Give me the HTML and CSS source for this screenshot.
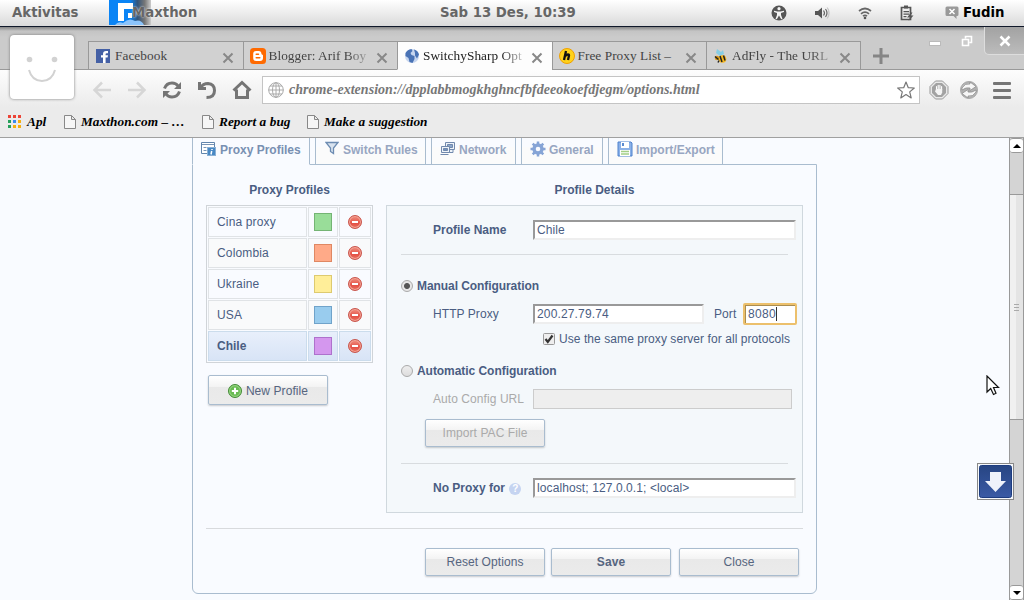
FILE: index.html
```html
<!DOCTYPE html>
<html lang="id">
  <head>
    <meta charset="UTF-8" />
    <meta name="viewport" content="width=device-width, initial-scale=1.0" />
    <title>SwitchySharp Options</title>
    <link rel="stylesheet" href="styles.css">
  </head>
  <body>
    <div class="panel">
      <span class="activities">Aktivitas</span>
      <div class="app">
        <svg class="app-icon" width="42" height="25" viewBox="0 0 42 25">
          <defs>
            <linearGradient id="fade"><stop offset="0.5" stop-color="#0a84f5" /><stop offset="0.68" stop-color="#34557a" /><stop offset="0.85" stop-color="#777" /><stop offset="1" stop-color="#ccc" /></linearGradient>
          </defs>
          <rect width="42" height="25" fill="url(#fade)" />
          <path d="M9 3h15v7h-5v5h-4v6H9z" fill="#fff" />
          <path d="M15 9h9v4h-5v6h-4z" fill="#0a84f5" />
          <path d="M19 13h4v5h-4z" fill="#fff" />
          <path d="M6 25q3-4 8-2q6-6 12-2q6-2 9 4z" fill="#8cc4fb" />
        </svg>
        <span class="app-name">Maxthon</span>
      </div>
      <span class="clock">Sab 13 Des, 10:39</span>
      <div class="tray">
        <svg width="16" height="16" viewBox="0 0 16 16"><circle cx="8" cy="8" r="7.5" fill="#555" /><circle cx="8" cy="3.7" r="1.6" fill="#f3f3f3" /><path d="M3 5.7l3.5.7h3L13 5.7v1.4l-3 .8v2l1.5 4-1.3.4L8 10.600l-2.200 3.700-1.300-.4 1.500-4v-2L3 7.100z" fill="#f3f3f3" /></svg>
        <svg width="16" height="16" viewBox="0 0 16 16"><path d="M1 6h3l4-3.500v11L4 10H1z" fill="#555" /><path d="M9.500 5.500q2 2.500 0 5M11.500 4q3 4 0 8" fill="none" stroke="#666" stroke-width="1.200" /><path d="M13.300 2.500q3.500 5.500 0 11" fill="none" stroke="#bbb" /></svg>
        <svg width="16" height="16" viewBox="0 0 16 16"><path d="M2 6q6-5 12 0M4 8.800q4-3.400 8 0M6 11.200q2-1.600 4 0" fill="none" stroke="#666" stroke-width="1.700" /><circle cx="8" cy="13" r="1.300" fill="#555" /></svg>
        <svg width="16" height="16" viewBox="0 0 16 16"><path d="M2.500 2.500h9v12h-9z" fill="#eee" stroke="#555" stroke-width="1.700" /><path d="M5 .5h4v3H5zM4.500 6h5.500v1.200H4.500zM4.500 8.500h5.500v1.200H4.500zM4.500 11h3v1.200h-3z" fill="#555" /><path d="M12 7.500l-4 5h3l-1.500 3.500 5-5.500h-3l2-3z" fill="#555" /></svg>
        <svg width="14" height="14" viewBox="0 0 14 14"><path d="M2 .5h10q1.500 0 1.500 1.500v6.500q0 1.500-1.500 1.500h-.5v3L8.500 10H2Q.5 10 .5 8.500V2Q.5.500 2 .5z" fill="#999" /><path d="M4.500 3l5 5M9.500 3l-5 5" stroke="#fff" stroke-width="1.500" /></svg>
      </div>
      <span class="user">Fudin</span>
    </div>

    <div class="tabstrip">
      <div class="tab">
        <svg width="14" height="14" viewBox="0 0 14 14"><rect width="14" height="14" fill="#4460a5" /><path d="M7 14V8.500H5V6.200h2V5q0-3 3-3h2v2.300h-1.400q-1 0-1 1v.9H12l-.4 2.300h-2V14z" fill="#fff" /></svg>
        <span class="tab-title first">Facebook</span>
        <svg class="tab-close" width="12" height="12" viewBox="0 0 12 12"><path d="M1.500 1.500l9 9M10.500 1.500l-9 9" /></svg>
      </div>
      <div class="tab">
        <svg width="16" height="16" viewBox="0 0 16 16"><rect width="16" height="16" rx="3.500" fill="#ff6a00" /><path d="M6.200 3h2.600q2.500 0 2.700 3 .2.800 1 .8.500 0 .5.600V10q0 3-3 3H6.200q-3 0-3-3V6q0-3 3-3z" fill="#fff" /><path d="M6.200 6.200h2.300M6.200 9.800h3.600" stroke="#ff6a00" stroke-width="1.500" stroke-linecap="round" /></svg>
        <span class="tab-title faded">Blogger: Arif Boy</span>
        <svg class="tab-close" width="12" height="12" viewBox="0 0 12 12"><path d="M1.500 1.500l9 9M10.500 1.500l-9 9" /></svg>
      </div>
      <div class="tab active">
        <svg width="16" height="16" viewBox="0 0 16 16"><circle cx="8" cy="8" r="7" fill="#c7d6ef" /><path d="M1.500 5q2-3.500 6-4l1 2-2 2 1 2 3 1v3l-2 4-3-1-1-4-3-2zM10 1.500q4 1 5 5l-2 4-2-3V5z" fill="#4a73b5" /></svg>
        <span class="tab-title faded">SwitchySharp Opt</span>
        <svg class="tab-close" width="12" height="12" viewBox="0 0 12 12"><path d="M1.500 1.500l9 9M10.500 1.500l-9 9" /></svg>
      </div>
      <div class="tab">
        <svg width="16" height="16" viewBox="0 0 16 16"><circle cx="8" cy="8" r="7.500" fill="#ffd21a" stroke="#f0a000" /><path d="M7 3L5 12M6 8q4-3 4-.5L9 12" fill="none" stroke="#111" stroke-width="2.300" /></svg>
        <span class="tab-title">Free Proxy List –</span>
        <svg class="tab-close" width="12" height="12" viewBox="0 0 12 12"><path d="M1.500 1.500l9 9M10.500 1.500l-9 9" /></svg>
      </div>
      <div class="tab">
        <svg width="16" height="16" viewBox="0 0 16 16"><path d="M4 1l4 3 2-2 1 4-4 2-4-3z" fill="#86cde4" /><ellipse cx="9.500" cy="11" rx="3.800" ry="3.800" fill="#f5b51c" /><circle cx="4" cy="10" r="2.200" fill="#d79a18" /><path d="M7 8l2 6M10.500 7.500l1.500 5M2 8.500l3.500 3M5 14.500l1-2" stroke="#222" stroke-width="1.500" /></svg>
        <span class="tab-title faded">AdFly - The URL</span>
        <svg class="tab-close" width="12" height="12" viewBox="0 0 12 12"><path d="M1.500 1.500l9 9M10.500 1.500l-9 9" /></svg>
      </div>
      <svg class="new-tab" width="18" height="18" viewBox="0 0 18 18"><path d="M9 1v16M1 9h16" stroke="#858585" stroke-width="3" /></svg>
      <div class="window-buttons">
        <svg class="minimize" width="12" height="6" viewBox="0 0 12 6"><rect x=".5" y=".5" width="11" height="4" fill="#fff" stroke="#bbb" /></svg>
        <svg class="restore" width="12" height="12" viewBox="0 0 12 12"><path d="M4.500 3.500V1.500h6v6H8.500M1.500 4.500h6v6h-6z" fill="none" stroke="#fff" stroke-width="1.600" /></svg>
        <div class="close-window">
          <svg width="12" height="12" viewBox="0 0 12 12"><path d="M1.500 1.500l9 9M10.500 1.500l-9 9" stroke="#fff" stroke-width="2.500" /></svg>
        </div>
      </div>
    </div>

    <div class="avatar">
      <svg width="64" height="64" viewBox="0 0 64 64"><circle cx="19.500" cy="24.500" r="2.800" fill="#d2d2d2" /><circle cx="44.500" cy="24.500" r="2.800" fill="#d2d2d2" /><path d="M19 35q3 11 13 11t13-11" fill="none" stroke="#d2d2d2" stroke-width="2" /></svg>
    </div>

    <div class="toolbar">
      <div class="nav">
        <svg width="20" height="18" viewBox="0 0 20 18"><path d="M10 1.500L2.500 9l7.500 7.500M3 9h16" class="nav-off" /></svg>
        <svg width="20" height="18" viewBox="0 0 20 18"><path d="M10 1.500L17.500 9 10 16.500M17 9H1" class="nav-off" /></svg>
        <svg width="20" height="18" viewBox="0 0 20 18"><path d="M2.500 7.500Q4.500 2 10 2q4 0 6 3M17.500 10.500Q15.500 16 10 16q-4 0-6-3" class="nav-on" /><path d="M19 1v7h-7zM1 17v-7h7z" fill="#757575" /></svg>
        <svg width="20" height="20" viewBox="0 0 20 20"><path d="M2.500 2v6.500H9M3 8Q6 3.500 11 3.500q6.500.5 6.500 7 0 7-8 7" class="nav-on" /></svg>
        <svg width="20" height="20" viewBox="0 0 20 20"><path d="M1.500 10.500L10 2.500l8.500 8M4.500 9.500v8h11v-8" class="nav-on" /></svg>
      </div>
      <div class="address">
        <svg width="16" height="16" viewBox="0 0 16 16"><g fill="none" stroke="#aaa"><circle cx="8" cy="8" r="7.300" /><ellipse cx="8" cy="8" rx="3.500" ry="7.300" /><path d="M8 .5v15M.5 8h15M2 4h12M2 12h12" /></g></svg>
        <span class="url">chrome-extension://dpplabbmogkhghncfbfdeeokoefdjegm/options.html</span>
        <svg class="star" width="18" height="18" viewBox="0 0 18 18"><path d="M9 1l2.300 5.700 6 .3-4.600 3.900 1.500 6L9 13.500l-5.200 3.400 1.500-6L.7 7l6-.3z" fill="#fff" stroke="#777" stroke-width="1.200" stroke-linejoin="round" /></svg>
      </div>
      <svg class="ext" width="20" height="20" viewBox="0 0 20 20"><path d="M6.500 1h7L19 6.500v7L13.500 19h-7L1 13.500v-7z" fill="#e8e8e8" stroke="#999" /><path d="M7 3h6l4 4v6l-4 4H7l-4-4V7z" fill="#a2a2a2" /><path d="M7.500 10V6.500M9.200 9V5.200M10.900 9V5.200M12.600 10V6.500" stroke="#fff" stroke-width="1.100" stroke-linecap="round" /><path d="M7 9h6.200v3.500L12 15H9l-3-3.500z" fill="#f4f4f4" /></svg>
      <svg class="ext" width="20" height="20" viewBox="0 0 20 20"><circle cx="10" cy="10" r="8.500" fill="#b0b0b0" stroke="#aaa" /><path d="M3 8q3-5 8-4V2l6 4.500-6 4V8Q7 7 3 10zM17 12q-3 5-8 4v2l-6-4.500 6-4V12q4 1 8-2z" fill="#f6f6f6" stroke="#888" stroke-width=".7" /></svg>
      <div class="menu"><i></i><i></i><i></i></div>
    </div>

    <div class="bookmarks">
      <div class="bookmark apps">
        <svg width="13" height="13" viewBox="0 0 13 13"><path d="M0 0h3v3H0zM5 0h3v3H5zM10 0h3v3h-3z" fill="#ec4437" /><path d="M0 5h3v3H0zM0 10h3v3H0z" fill="#26a05a" /><path d="M5 5h3v3H5z" fill="#3a8af0" /><path d="M10 5h3v3h-3zM5 10h3v3H5zM10 10h3v3h-3z" fill="#f5ae10" /></svg>
        <span>Apl</span>
      </div>
      <div class="bookmark home-page">
        <svg width="12" height="14" viewBox="0 0 12 14"><path d="M.5.500h7l4 4v9H.5zM7.500.500v4h4" fill="#f6f6f6" stroke="#888" /></svg>
        <span>Maxthon.com – …</span>
      </div>
      <div class="bookmark report">
        <svg width="12" height="14" viewBox="0 0 12 14"><path d="M.5.500h7l4 4v9H.5zM7.500.500v4h4" fill="#f6f6f6" stroke="#888" /></svg>
        <span>Report a bug</span>
      </div>
      <div class="bookmark">
        <svg width="12" height="14" viewBox="0 0 12 14"><path d="M.5.500h7l4 4v9H.5zM7.500.500v4h4" fill="#f6f6f6" stroke="#888" /></svg>
        <span>Make a suggestion</span>
      </div>
    </div>

    <div class="page">
      <div class="options">
        <div class="option-tabs">
          <div class="option-tab profiles selected">
            <svg width="16" height="16" viewBox="0 0 16 16"><path d="M.5 1.500h13v11H.5z" fill="#fff" stroke="#6185ad" /><path d="M1 3.500h12M2.500 6.500h3M7 6.500h5M2.500 9.500h3" stroke="#7894b5" /><rect x="6.500" y="6.500" width="8" height="8" fill="#4888c4" stroke="#8ab0d5" /><path d="M11 8v1M10.700 10l-.7 3.500" stroke="#fff" stroke-width="1.500" /></svg>
            <span>Proxy Profiles</span>
          </div>
          <div class="option-tab rules">
            <svg width="14" height="14" viewBox="0 0 14 14"><path d="M1 1.500h12L8.500 7v5.500l-3-2V7z" fill="#d9e3ef" stroke="#6d8cb2" stroke-width="1.300" /></svg>
            <span>Switch Rules</span>
          </div>
          <div class="option-tab network">
            <svg width="16" height="16" viewBox="0 0 16 16"><g fill="#eef3f9" stroke="#7189ad"><path d="M5.500 1.500h9v7h-9zM8 11.500h5v-3H8z" /><path d="M7.500 3.500h5v3h-5z" fill="#8aa6cb" /><path d="M1.500 5.500h8v6h-8zM.5 13.500h8" /><path d="M3.500 7.500h4v2h-4z" fill="#7291bf" /></g></svg>
            <span>Network</span>
          </div>
          <div class="option-tab general">
            <svg width="16" height="16" viewBox="0 0 16 16"><path d="M8 .5v15M.5 8h15M2.700 2.700l10.600 10.600M13.300 2.700L2.700 13.300" stroke="#86a4d6" stroke-width="2.500" /><circle cx="8" cy="8" r="4" fill="#f8faff" stroke="#86a4d6" stroke-width="3.400" /></svg>
            <span>General</span>
          </div>
          <div class="option-tab export">
            <svg width="16" height="16" viewBox="0 0 16 16"><path d="M1 1h13l1 1v13H1z" fill="#8bb1e8" stroke="#4f82cd" /><path d="M4 1h8v6H4zM3 9h10v6H3z" fill="#fff" /><path d="M5 2h2v3H5z" fill="#5b8bd0" /><path d="M4 10.500h8M4 13h8" stroke="#a3cf86" stroke-width="1.500" /></svg>
            <span>Import/Export</span>
          </div>
        </div>

        <div class="content">
          <div class="columns">
            <div class="profiles-column">
              <h3>Proxy Profiles</h3>
              <div class="profile-table">
                <div class="cell">Cina proxy</div>
                <div class="cell center"><div class="swatch green"></div></div>
                <div class="cell center"><span class="delete"></span></div>
                <div class="cell">Colombia</div>
                <div class="cell center"><div class="swatch orange"></div></div>
                <div class="cell center"><span class="delete"></span></div>
                <div class="cell">Ukraine</div>
                <div class="cell center"><div class="swatch yellow"></div></div>
                <div class="cell center"><span class="delete"></span></div>
                <div class="cell">USA</div>
                <div class="cell center"><div class="swatch blue"></div></div>
                <div class="cell center"><span class="delete"></span></div>
                <div class="cell current">Chile</div>
                <div class="cell center current"><div class="swatch purple"></div></div>
                <div class="cell center current"><span class="delete"></span></div>
              </div>
              <button class="button new-profile">
                <svg width="14" height="14" viewBox="0 0 14 14"><circle cx="7" cy="7" r="6.500" fill="#6abb54" stroke="#458b39" /><circle cx="7" cy="7" r="5.400" fill="none" stroke="#a5dc90" stroke-width=".8" /><path d="M7 3.800v6.400M3.800 7h6.400" stroke="#fff" stroke-width="2" /></svg>
                <span>New Profile</span>
              </button>
            </div>

            <div class="details-column">
              <h3>Profile Details</h3>
              <div class="details">
                <div class="row">
                  <span class="label strong">Profile Name</span>
                  <input class="field wide" type="text" value="Chile" />
                </div>
                <div class="line"></div>
                <div class="row manual">
                  <span class="radio on"></span>
                  <b>Manual Configuration</b>
                </div>
                <div class="row http">
                  <span class="label">HTTP Proxy</span>
                  <input class="field host" type="text" value="200.27.79.74" />
                  <span class="port-label">Port</span>
                  <div class="field port">8080<span class="caret"></span></div>
                </div>
                <div class="row same">
                  <svg width="12" height="12" viewBox="0 0 12 12"><rect x=".5" y=".5" width="11" height="11" rx="1" fill="#eee" stroke="#999" /><path d="M2.500 6l2.300 3L9.500 2.500" fill="none" stroke="#333" stroke-width="2.200" /></svg>
                  <span>Use the same proxy server for all protocols</span>
                </div>
                <div class="row auto">
                  <span class="radio"></span>
                  <b>Automatic Configuration</b>
                </div>
                <div class="row auto-url">
                  <span class="label muted">Auto Config URL</span>
                  <input class="field disabled" type="text" disabled />
                </div>
                <button class="button import" disabled>Import PAC File</button>
                <div class="line second"></div>
                <div class="row">
                  <span class="label strong">No Proxy for <span class="help">?</span></span>
                  <input class="field wide" type="text" value="localhost; 127.0.0.1; &lt;local&gt;" />
                </div>
              </div>
            </div>
          </div>

          <div class="footer">
            <button class="button">Reset Options</button>
            <button class="button save">Save</button>
            <button class="button">Close</button>
          </div>
        </div>
      </div>

      <div class="scrollbar">
        <div class="arrow"><svg width="8" height="4" viewBox="0 0 8 4"><path d="M4 0l4 4H0z" /></svg></div>
        <div class="thumb"><i></i><i></i><i></i></div>
        <div class="arrow"><svg width="8" height="4" viewBox="0 0 8 4"><path d="M0 0h8L4 4z" /></svg></div>
      </div>
    </div>

    <div class="scroll-down">
      <svg width="33" height="33" viewBox="0 0 33 33"><defs><linearGradient id="navy" x2="0" y2="1"><stop offset="0" stop-color="#274583" /><stop offset="1" stop-color="#3a5aa5" /></linearGradient></defs><rect x=".5" y=".5" width="32" height="32" rx="2" fill="url(#navy)" stroke="#1d3c80" /><path d="M11 7h11v9h5L16.500 27 6 16h5z" fill="#eef2fb" /></svg>
    </div>
    <svg class="cursor" width="14" height="21" viewBox="0 0 14 21"><path d="M1 1v16l3.700-3.500L7.500 19.500l2.500-1.200L7.500 12.500h5z" fill="#fff" stroke="#111" stroke-width="1.200" /></svg>
  </body>
</html>
```
FILE: styles.css
```css
* {
  box-sizing: border-box;
}

body {
  margin: 0;
  width: 1024px;
  height: 600px;
  overflow: hidden;
  position: relative;
  background: #f9fbff;
  font-family: "Liberation Sans", Arial, sans-serif;
  font-size: 12px;
  color: #4a5d82;
}

svg {
  display: block;
  flex: none;
}

/* desktop panel */
.panel {
  display: flex;
  align-items: center;
  height: 27px;
  padding: 0 0 1px 12px;
  background: linear-gradient(#fff, #dadada);
  border-bottom: 1px solid #10182a;
  font-family: "DejaVu Sans", sans-serif;
  font-size: 13.300px;
  font-weight: bold;
  line-height: 25px;
  color: #666;
  white-space: nowrap;
}

.activities {
  width: 97px;
}

.app {
  display: flex;
  width: 331px;
}

.app-name {
  margin-left: -19px;
  text-shadow: 0 0 2px #fff;
}

.clock {
  width: 331px;
}

.tray {
  display: flex;
  align-items: center;
  width: 192px;
}

.tray svg {
  margin-right: 27px;
}

.tray svg:nth-child(3) {
  margin-right: 26px;
}

.tray svg:nth-child(4) {
  margin-right: 30px;
}

.tray svg:last-child {
  margin-right: 0;
}

.user {
  color: #000;
}

/* browser tabs */
.tabstrip {
  display: flex;
  align-items: flex-end;
  height: 43px;
  padding-left: 88px;
  background: linear-gradient(#858585, #c4c4c4 4px, #cbcbcb 10px);
  box-shadow: inset 0 -1px #999;
}

.tab {
  display: flex;
  flex: none;
  align-items: center;
  width: 154.500px;
  height: 29px;
  padding: 1px 0 0 6px;
  background: #d1d1d1;
  border: 1px solid #999;
  border-right-width: 0;
  font-family: "Liberation Serif", serif;
  font-size: 13.300px;
  color: #444;
}

.tab:first-child {
  padding-left: 7px;
}

.tab:nth-child(5) {
  border-right-width: 1px;
}

.tab.active {
  background: #fdfdfd;
  border-bottom-color: #fdfdfd;
  color: #222;
}

.tab-title {
  flex: 1;
  margin: 0 5px 0 3px;
  padding-bottom: 1px;
  letter-spacing: 0.050px;
  white-space: nowrap;
}

.tab-title.first {
  margin-left: 5px;
}

.faded {
  -webkit-mask-image: linear-gradient(to right, #000 78px, rgba(0, 0, 0, 0.3) 98px);
  mask-image: linear-gradient(to right, #000 78px, rgba(0, 0, 0, 0.3) 98px);
}

.tab-close {
  margin: 3px 9px 0 0;
}

.tab-close path {
  stroke: #888;
  stroke-width: 2;
}

.new-tab {
  margin: 0 0 5px 11px;
}

.window-buttons {
  display: flex;
  flex: none;
  align-self: flex-start;
  margin-left: 39px;
}

.minimize {
  margin-top: 14px;
}

.restore {
  margin: 8px 11px 0 20px;
}

.close-window {
  display: flex;
  align-items: center;
  justify-content: center;
  width: 42px;
  height: 28px;
  background: linear-gradient(#a2a2a2, #bcbcbc);
  border: 1px solid #ddd;
  border-top: 0;
  border-radius: 0 0 0 5px;
}

.avatar {
  position: absolute;
  left: 10px;
  top: 35px;
  background: #fff;
  border-radius: 4px;
  box-shadow: 0 0 3px #777;
}

/* address row */
.toolbar {
  display: flex;
  align-items: center;
  height: 37px;
  padding: 3px 0 0 84px;
  background: linear-gradient(#fdfdfd, #ebebeb);
}

.nav {
  display: grid;
  grid-template-columns: repeat(5, 35px);
  justify-items: center;
  align-items: center;
}

.nav-off {
  fill: none;
  stroke: #d6d6d6;
  stroke-width: 2.500;
}

.nav-on {
  fill: none;
  stroke: #757575;
  stroke-width: 3;
}

.address {
  display: flex;
  align-items: center;
  width: 658px;
  height: 28px;
  margin-left: 3px;
  padding: 0 4px 0 5px;
  background: #fff;
  border: 1px solid #c4c4c4;
}

.url {
  flex: 1;
  margin-left: 5px;
  font: italic bold 14px "Liberation Serif", serif;
  letter-spacing: 0.030px;
  color: #777;
}

.ext {
  margin-left: 9px;
}

.ext + .ext {
  margin-left: 10px;
}

.menu {
  display: grid;
  gap: 4px;
  width: 18px;
  margin-left: 14px;
}

.menu i {
  height: 3px;
  background: #757575;
  border-radius: 1px;
}

.bookmarks {
  display: flex;
  height: 31px;
  padding: 0 0 1px 8px;
  background: #ebebeb;
  border-bottom: 1px solid #a0a0a0;
  font: italic bold 13.300px "Liberation Serif", serif;
  letter-spacing: 0.050px;
  color: #000;
}

.bookmark {
  display: flex;
  align-items: center;
  gap: 5px;
  white-space: nowrap;
}

.apps {
  gap: 6px;
  width: 56px;
}

.home-page {
  width: 138px;
}

.report {
  width: 105px;
}

/* options page */
.page {
  display: flex;
  justify-content: space-between;
  height: 462px;
}

.options {
  width: 625px;
  margin-left: 192px;
}

.option-tabs {
  display: flex;
  position: relative;
  gap: 5px;
  height: 27px;
  margin-bottom: -1px;
}

.option-tab {
  display: flex;
  gap: 3px;
  padding: 3px 0 0 8px;
  background: linear-gradient(#f9fbff 9px, #fbfbfb 9px);
  border: 1px solid #a9bccf;
  border-top: 0;
  font-weight: bold;
  line-height: 18px;
  color: #97a6c2;
  white-space: nowrap;
}

.option-tab.selected {
  background: #f9fbff;
  border-bottom-color: #f9fbff;
  color: #7890b2;
}

.profiles {
  width: 118px;
}

.rules {
  gap: 4px;
  width: 111px;
  padding-left: 9px;
}

.network {
  width: 85px;
}

.general {
  width: 82px;
}

.export {
  width: 115px;
}

.content {
  height: 430px;
  padding: 0 13px;
  border: 1px solid #a9bccf;
  border-radius: 0 0 6px 6px;
}

.columns {
  display: flex;
  gap: 13px;
  height: 364px;
  border-bottom: 1px solid #d8dadd;
}

h3 {
  height: 40px;
  margin: 0;
  font-size: 12px;
  line-height: 51px;
  text-align: center;
}

.profiles-column {
  width: 167px;
}

.profile-table {
  display: grid;
  grid-template-columns: 99px 30px 32px;
  grid-auto-rows: 30px;
  gap: 1px;
  padding: 1px;
  border: 1px solid #d0d4d8;
  letter-spacing: 0.150px;
}

.cell {
  padding-left: 8px;
  border: 1px solid #e0e3e6;
  line-height: 28px;
}

.cell:nth-child(6n + 4),
.cell:nth-child(6n + 5),
.cell:nth-child(6n + 6) {
  background: #f9fafb;
}

.center {
  display: flex;
  align-items: center;
  justify-content: center;
  padding: 0;
}

.cell.current {
  background: linear-gradient(#e8effb, #d8e4f6);
  border-color: #cbdcec;
  font-weight: bold;
  letter-spacing: 0;
}

.swatch {
  width: 18px;
  height: 18px;
  border: 1px solid;
}

.green {
  background: #99dd99;
  border-color: #74b474;
}

.orange {
  background: #ffaa88;
  border-color: #df8863;
}

.yellow {
  background: #ffee99;
  border-color: #ddca70;
}

.blue {
  background: #99ccee;
  border-color: #70a3ca;
}

.purple {
  background: #d497ee;
  border-color: #ae71cc;
}

.delete {
  display: flex;
  align-items: center;
  justify-content: center;
  width: 14px;
  height: 14px;
  background: linear-gradient(#f09080, #e45045 60%, #e87060);
  border: 1px solid #c8534a;
  border-radius: 50%;
  box-shadow: inset 0 0 0 1px #f4a89a;
}

.delete::before {
  content: "";
  width: 6px;
  height: 2px;
  background: #fff;
}

.button {
  width: 120px;
  height: 28px;
  padding: 0;
  background: linear-gradient(#fff, #f3f3f3 40%, #e9e9e9 40%, #ebebeb);
  border: 1px solid #a9bccf;
  border-radius: 2px;
  box-shadow: 0 1px 2px rgba(0, 0, 0, 0.2);
  font: 12px "Liberation Sans", Arial, sans-serif;
  letter-spacing: 0.080px;
  color: #56657f;
}

.new-profile {
  display: flex;
  align-items: center;
  justify-content: center;
  gap: 4px;
  height: 30px;
  margin: 12px 0 0 2px;
  padding-top: 1px;
}

.details-column {
  width: 417px;
}

.details {
  height: 308px;
  padding: 13px 0 0 14px;
  background: #f4f8fb;
  border: 1px solid #d0d8de;
}

.row {
  display: flex;
  align-items: center;
  height: 22px;
  letter-spacing: 0.070px;
  white-space: nowrap;
}

.row b {
  letter-spacing: -0.070px;
}

.auto b {
  letter-spacing: -0.050px;
}

.label {
  width: 132px;
  padding-left: 32px;
}

.strong {
  font-weight: bold;
  letter-spacing: 0;
}

.muted {
  color: #aaa;
}

.field {
  height: 20px;
  padding: 0 2px;
  background: #fff;
  border: 2px solid;
  border-color: #999 #eee #eee #999;
  font: 12px "Liberation Sans", Arial, sans-serif;
  letter-spacing: 0.100px;
  color: #4a5d82;
}

.wide {
  width: 263px;
}

.host {
  width: 171px;
  letter-spacing: 0.150px;
}

.port-label {
  width: 40px;
  padding-left: 10px;
}

.port {
  display: flex;
  align-items: center;
  width: 52px;
  border: 1px solid;
  border-color: #a98d52 #eee #eee #a98d52;
  padding-left: 3px;
  outline: 2px solid #ecc06c;
  outline-offset: -1px;
  border-radius: 1px;
  box-shadow: inset 1px 1px #a98d52;
  letter-spacing: 0.300px;
}

.caret {
  width: 1px;
  height: 14px;
  background: #333;
}

.line {
  width: 387px;
  height: 1px;
  margin: 13px 0 20px;
  background: #d8dcdf;
}

.radio {
  width: 12px;
  height: 12px;
  margin-right: 4px;
  background: linear-gradient(#eee, #ddd);
  border: 1px solid #aaa;
  border-radius: 50%;
}

.radio.on {
  background: radial-gradient(circle, #555 2.500px, #e6e6e6 3.500px);
}

.http,
.auto-url {
  margin-top: 6px;
}

.same {
  gap: 4px;
  margin-top: 3px;
  padding-left: 142px;
}

.auto {
  margin-top: 10px;
}

.disabled {
  width: 259px;
  background: #eee;
  border: 1px solid #ccc;
}

.import {
  display: block;
  margin: 9px 0 0 24px;
  color: #aaa;
}

.line.second {
  margin: 16px 0 13px;
}

.help {
  display: inline-block;
  width: 12px;
  height: 12px;
  margin-left: 1px;
  background: #c5d4f1;
  border-radius: 50%;
  font-size: 10px;
  line-height: 12px;
  text-align: center;
  color: #fff;
}

.footer {
  display: flex;
  gap: 6px;
  padding: 19px 0 0 219px;
}

.save {
  margin-right: 2px;
  font-weight: bold;
}

.scrollbar {
  display: flex;
  flex-direction: column;
  justify-content: space-between;
  width: 15px;
  background: #d4d4d4;
  border: 1px solid #999;
  border-width: 0 1px;
}

.arrow {
  display: flex;
  align-items: center;
  justify-content: center;
  height: 15px;
  background: #fff;
  border: 1px solid #999;
  border-width: 1px 0;
  border-radius: 3px;
}

.thumb {
  display: flex;
  flex-direction: column;
  align-items: center;
  justify-content: center;
  gap: 2px;
  height: 226px;
  margin: 41px 0 165px;
  background: linear-gradient(to right, #f0f0f0 50%, #e4e4e4 50%);
  border: 1px solid #999;
  border-width: 1px 0;
}

.thumb i {
  width: 5px;
  height: 1px;
  background: #aaa;
}

.scroll-down {
  position: absolute;
  left: 977px;
  top: 463px;
  padding: 1px;
  background: #f5f7fb;
  border: 1px solid #888;
}

.cursor {
  position: absolute;
  left: 986px;
  top: 375px;
}
```
